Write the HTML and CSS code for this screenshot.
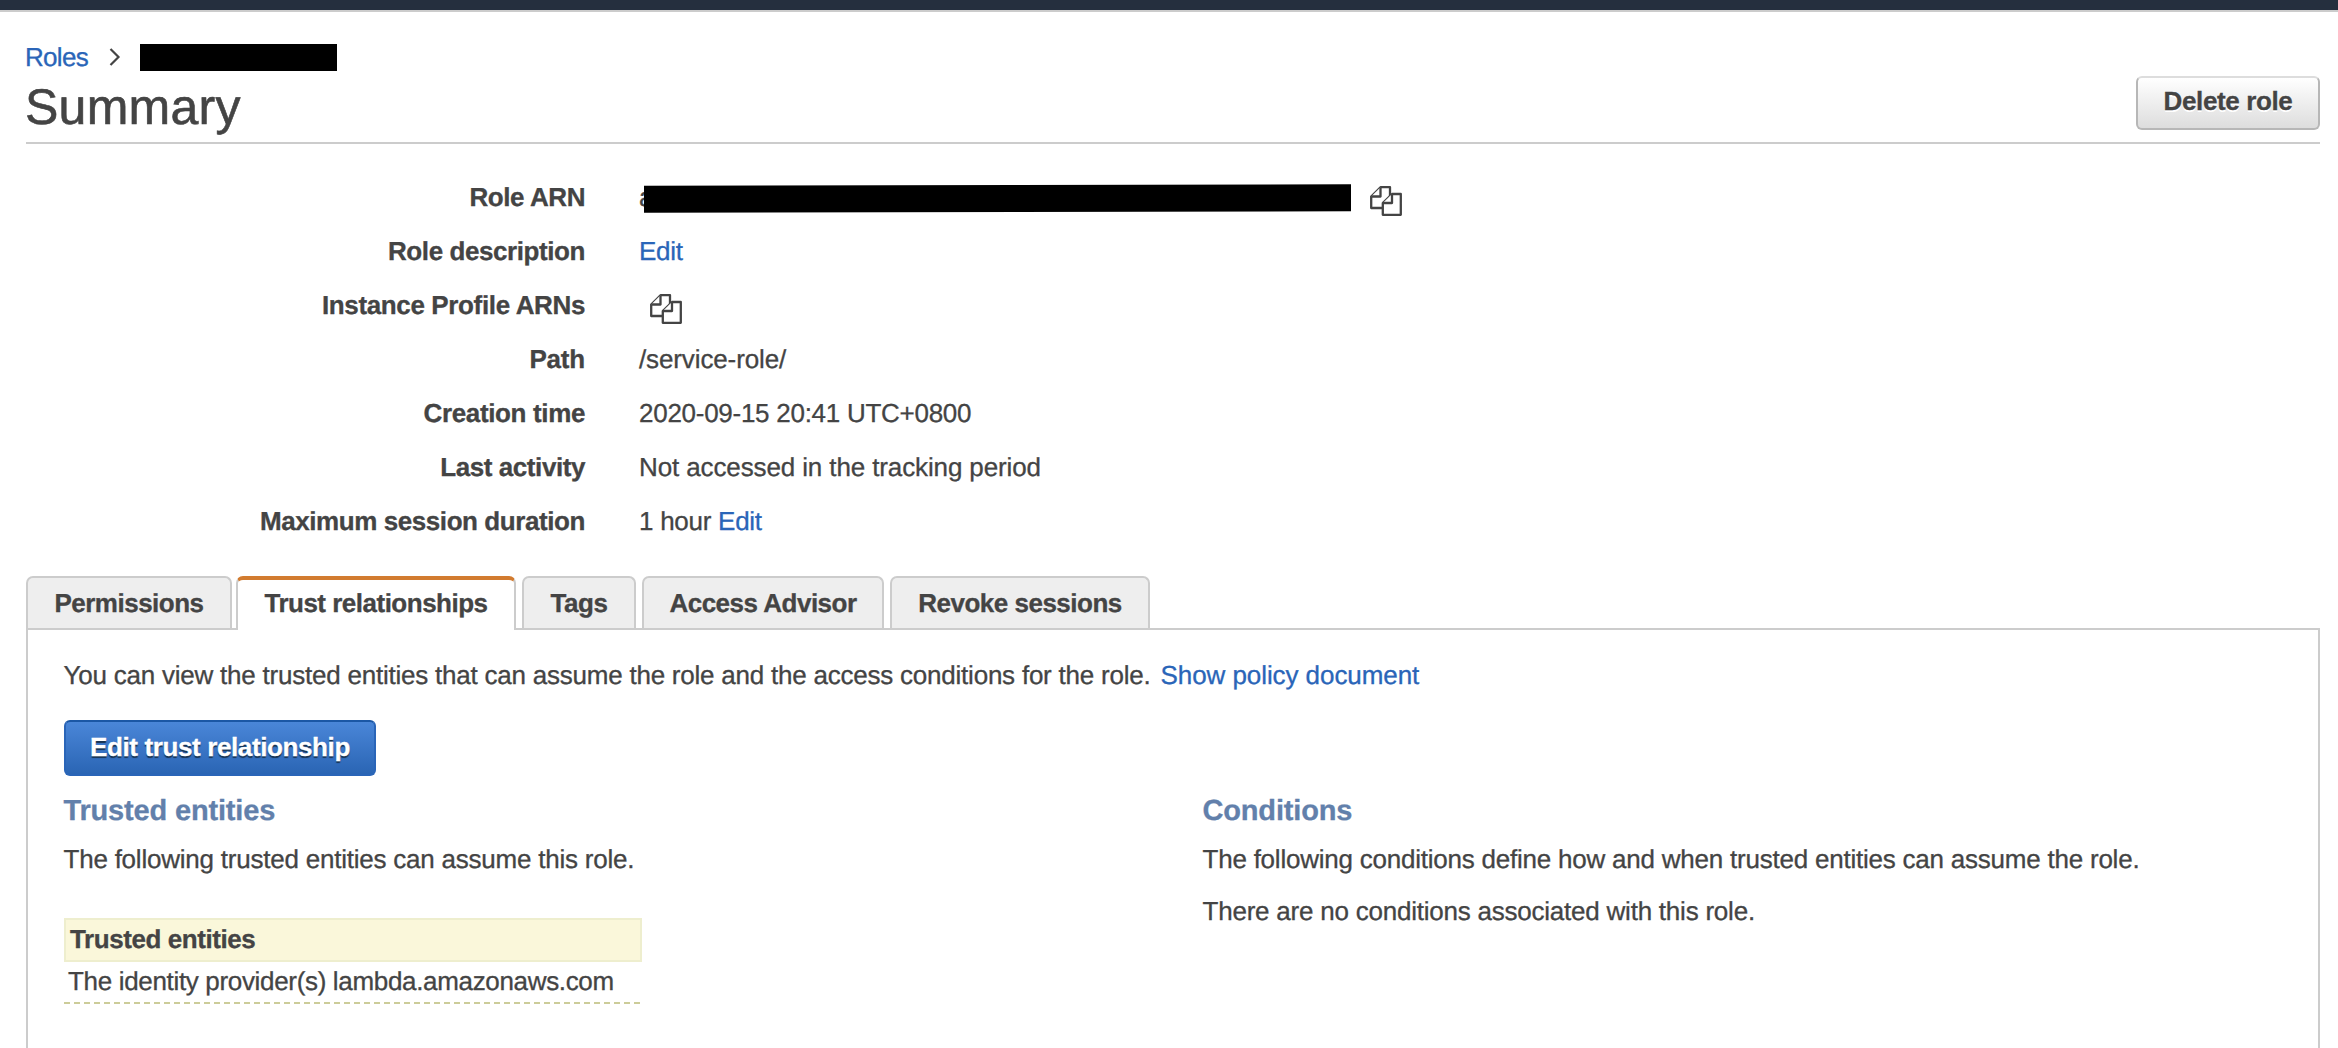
FILE: index.html
```html
<!DOCTYPE html>
<html lang="en">
<head>
<meta charset="utf-8">
<title>Role summary</title>
<link rel="stylesheet" href="styles.css">
</head>
<body>
<svg class="defs" width="0" height="0" aria-hidden="true">
  <symbol id="copy" viewBox="0 0 32 30">
    <g fill="#fff" stroke="#444" stroke-width="2.300" stroke-linejoin="round">
      <path d="M10.500 1.200H20V22H1.200V10.500Z"/>
      <path d="M10.500 1.200V10.500H1.200"/>
      <path d="M22 8H30.800V28.800H12.800V17Z"/>
      <path d="M22 8V17H12.800"/>
    </g>
  </symbol>
</svg>
<div class="topbar"></div>
<main class="page">
  <header class="header">
    <div>
      <nav class="crumbs">
        <a href="#">Roles</a>
        <svg class="chevron" width="12" height="20" viewBox="0 0 12 20"><path d="M1.500 2L9.500 10L1.500 18" fill="none" stroke="#444" stroke-width="2.200"/></svg>
        <span class="redacted redacted-name"></span>
      </nav>
      <h1>Summary</h1>
    </div>
    <button class="btn btn-delete">Delete role</button>
  </header>

  <dl class="details">
    <dt>Role ARN</dt>
    <dd class="arn"><span class="arn-text">a</span><span class="redacted redacted-arn"></span><svg class="copy" width="32" height="30"><use href="#copy"/></svg></dd>
    <dt>Role description</dt>
    <dd><a class="edit" href="#">Edit</a></dd>
    <dt class="instance">Instance Profile ARNs</dt>
    <dd class="profile"><svg class="copy" width="32" height="30"><use href="#copy"/></svg></dd>
    <dt class="path">Path</dt>
    <dd class="loose">/service-role/</dd>
    <dt class="instance">Creation time</dt>
    <dd>2020-09-15 20:41 UTC+0800</dd>
    <dt>Last activity</dt>
    <dd class="loose">Not accessed in the tracking period</dd>
    <dt>Maximum session duration</dt>
    <dd>1 hour <a href="#">Edit</a></dd>
  </dl>

  <div class="tabs">
    <div class="tab tab-permissions">Permissions</div>
    <div class="tab tab-trust active">Trust relationships</div>
    <div class="tab tab-tags">Tags</div>
    <div class="tab tab-advisor">Access Advisor</div>
    <div class="tab tab-revoke">Revoke sessions</div>
  </div>

  <section class="panel">
    <p class="intro"><span>You can view the trusted entities that can assume the role and the access conditions for the role.</span><a class="policy-link" href="#">Show policy document</a></p>
    <button class="btn btn-primary">Edit trust relationship</button>
    <div class="columns">
      <div>
        <h2>Trusted entities</h2>
        <p>The following trusted entities can assume this role.</p>
        <div class="entities">
          <div class="entities-head">Trusted entities</div>
          <div class="entities-row">The identity provider(s) lambda.amazonaws.com</div>
        </div>
      </div>
      <div>
        <h2>Conditions</h2>
        <p>The following conditions define how and when trusted entities can assume the role.</p>
        <p class="none">There are no conditions associated with this role.</p>
      </div>
    </div>
  </section>
</main>
</body>
</html>
```
FILE: styles.css
```css
* { box-sizing: border-box; }

body {
  margin: 0;
  height: 1048px;
  overflow: hidden;
  background: #fff;
  color: #444;
  font: 26px/30px "Liberation Sans", Arial, sans-serif;
  text-rendering: geometricPrecision;
  -webkit-text-stroke: 0.3px currentColor;
}

h1, h2, p, dl, dt, dd { margin: 0; }
a { color: #2a65b8; text-decoration: none; -webkit-text-stroke-color: #2a65b8; }
.defs { position: absolute; }

.topbar {
  height: 12px;
  background: #252f3e;
  border-bottom: 2px solid #ccc;
}

.page {
  display: flex;
  flex-direction: column;
  height: 1036px;
  padding: 30px 18px 0 26px;
}

.header {
  display: flex;
  justify-content: space-between;
  align-items: flex-start;
  height: 102px;
  border-bottom: 2px solid #ccc;
}

.crumbs { display: flex; align-items: center; height: 30px; margin-left: -1px; }
.crumbs a { width: 84px; letter-spacing: -0.7px; }
.chevron { margin-right: 19px; }
.redacted { background: #000; flex: none; }
.redacted-name { width: 197px; height: 27px; }

h1 {
  margin: 7px 0 0 -1px;
  font-size: 50px;
  line-height: 56px;
  font-weight: 400;
  letter-spacing: 0.25px;
  -webkit-text-stroke-width: 0.6px;
}

.btn {
  display: block;
  padding: 0;
  border-radius: 6px;
  font: bold 26px/30px "Liberation Sans", Arial, sans-serif;
  text-align: center;
  letter-spacing: -0.38px;
}

.btn-delete {
  width: 184px;
  height: 54px;
  margin-top: 34px;
  padding-bottom: 4px;
  border: 2px solid #b7b7b7;
  border-top-color: #ddd;
  background: linear-gradient(#fff, #ddd);
  color: #444;
  text-shadow: 0 2px 0 #fff;
}

.details {
  display: grid;
  grid-template-columns: 559px 1fr;
  grid-auto-rows: 30px;
  row-gap: 24px;
  column-gap: 54px;
  padding-top: 38px;
}

dt { text-align: right; font-weight: 700; letter-spacing: -0.42px; }
dt.instance { letter-spacing: -0.36px; }
dt.path { letter-spacing: -0.2px; }
dd { letter-spacing: -0.27px; }
dd.loose { letter-spacing: -0.12px; }
.edit { letter-spacing: -0.3px; }
.arn, .profile { display: flex; }
.arn-text { width: 5px; }
.redacted-arn { width: 707px; height: 27px; margin-top: 3px; transform: rotate(-0.11deg); }
.copy { flex: none; margin-top: 4px; }
.arn .copy { margin-left: 19px; }
.profile .copy { margin-left: 11px; }

.tabs { display: flex; gap: 6px; margin-top: 40px; height: 52px; }

.tab {
  padding-top: 10px;
  border: 2px solid #ccc;
  border-bottom: 0;
  border-radius: 7px 7px 0 0;
  background: #eee;
  font-weight: 700;
  text-align: center;
  letter-spacing: -0.5px;
}
.tab.active {
  position: relative;
  height: 54px;
  padding-top: 8px;
  border-top: 4px solid #d27b2f;
  background: #fff;
}
.tab-permissions { width: 206px; }
.tab-trust { width: 280px; margin-left: -2px; }
.tab-tags { width: 114px; }
.tab-advisor { width: 242px; }
.tab-revoke { width: 260px; }

.panel {
  flex: 1;
  padding: 30px 36px 0;
  border: 2px solid #ccc;
  border-bottom: 0;
  letter-spacing: -0.225px;
}
.panel p { margin-left: -0.5px; }
.intro { display: flex; gap: 10px; }
.policy-link { letter-spacing: -0.07px; }

.btn-primary {
  width: 312px;
  height: 56px;
  margin-top: 30px;
  padding-bottom: 3px;
  border: 2px solid #2a65b8;
  border-top-color: #1b57a5;
  background: linear-gradient(#4a86d8, #2a65b4);
  color: #fff;
  text-shadow: 0 2px 1px #173250;
}

.columns { display: grid; grid-template-columns: 1139px 1fr; margin-top: 19px; }
h2 {
  margin: 0 0 17px -0.5px;
  color: #6280ab;
  font-size: 29px;
  line-height: 32px;
  letter-spacing: -0.17px;
}

.entities { width: 578px; margin-top: 44px; }
.entities-head {
  height: 44px;
  padding: 4px 4px;
  border: 2px solid #eeeece;
  background: #faf7da;
  font-weight: 700;
  letter-spacing: -0.43px;
}
.entities-row {
  height: 42px;
  margin-right: 2px;
  padding: 4px 4px 0;
  background: repeating-linear-gradient(90deg, #cccc99 0 6px, transparent 6px 10px) left bottom / 100% 2px no-repeat;
  letter-spacing: -0.33px;
}
.panel .none { margin-top: 22px; }
```
